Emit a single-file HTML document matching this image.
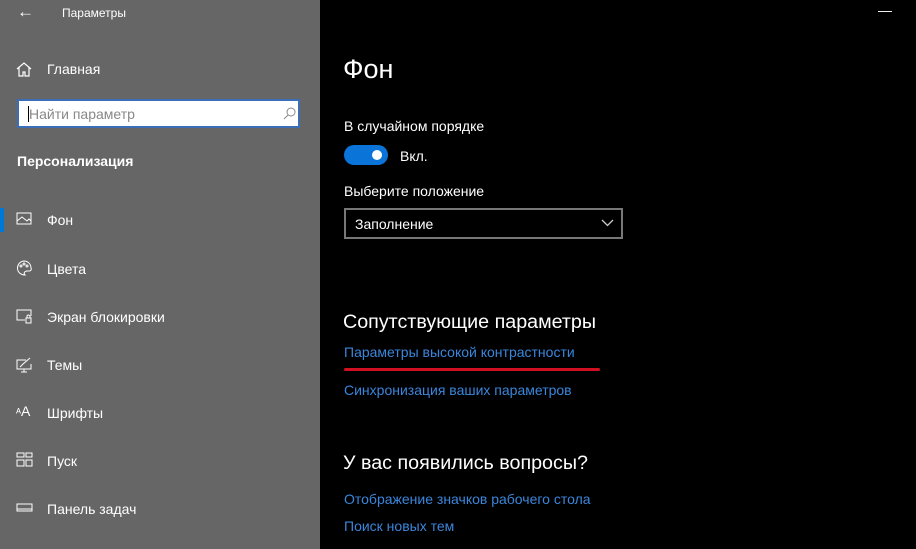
<!DOCTYPE html><html><head><meta charset="utf-8"><style>
body{margin:0;width:916px;height:549px;overflow:hidden;background:#000;font-family:"Liberation Sans",sans-serif;position:relative}
.side{position:absolute;left:0;top:0;width:320px;height:549px;background:#666;color:#fff}
.t{position:absolute;white-space:nowrap}
.s{font-size:14px;color:#fff}
.ic{position:absolute;left:16px}
.l{color:#3a86dc;font-size:14px}
</style></head><body>
<div class="side">
<div class="t" style="left:17px;top:2px;font-size:17px">←</div>
<div class="t" style="left:62px;top:6px;font-size:12px">Параметры</div>
<svg class="ic" style="top:61px" width="16" height="16" viewBox="0 0 16 16" fill="none" stroke="#fff" stroke-width="1.2"><path d="M1 8L8 2l7 6M3 6.5V15h4v-4h2v4h4V6.5"/></svg>
<div class="t s" style="left:47px;top:61px">Главная</div>
<div style="position:absolute;left:17px;top:99px;width:283px;height:29px;background:#fff;border:2px solid #3a6fb8;box-sizing:border-box"></div>
<div style="position:absolute;left:28px;top:106px;width:1px;height:16px;background:#000"></div>
<div class="t" style="left:29px;top:106px;font-size:14px;color:#888">Найти параметр</div>
<svg style="position:absolute;left:283px;top:107px" width="13" height="13" viewBox="0 0 13 13" fill="none" stroke="#888"><circle cx="8" cy="5" r="4"/><path d="M5 8l-4 4"/></svg>
<div class="t" style="left:17px;top:153px;font-size:14px;font-weight:bold">Персонализация</div>
<div style="position:absolute;left:0;top:208px;width:4px;height:24px;background:#0078d7"></div>
<svg class="ic" style="top:212px" width="16" height="14" viewBox="0 0 16 14" fill="none" stroke="#fff"><rect x="1" y="1" width="14" height="11"/><path d="M1 9l5-4 5 4 2-2 2 2"/></svg>
<div class="t s" style="left:47px;top:212px">Фон</div>
<svg class="ic" style="top:260px" width="16" height="16" viewBox="0 0 16 16" fill="none" stroke="#fff"><path d="M8 1a7 7 0 1 0 1 14c-2-2 0-4 2-4h2a2 2 0 0 0 2-3A7 7 0 0 0 8 1z"/><circle cx="5" cy="6" r="1"/><circle cx="8" cy="4" r="1"/><circle cx="11" cy="6" r="1"/></svg>
<div class="t s" style="left:47px;top:261px">Цвета</div>
<svg class="ic" style="top:309px" width="16" height="15" viewBox="0 0 16 15" fill="none" stroke="#fff"><path d="M9 11H1V1h14v6"/><rect x="10" y="9" width="5" height="5"/><path d="M11 9V7.5a1.5 1.5 0 0 1 3 0V9"/></svg>
<div class="t s" style="left:47px;top:309px">Экран блокировки</div>
<svg class="ic" style="top:357px" width="16" height="16" viewBox="0 0 16 16" fill="none" stroke="#fff"><path d="M10 3H1v9h14V7M8 12v3M5 15h6M4 10l3-3 7-6"/></svg>
<div class="t s" style="left:47px;top:357px">Темы</div>
<div class="t" style="left:16px;top:403px;font-size:11px">ᴬ<span style="font-size:14px">A</span></div>
<div class="t s" style="left:47px;top:405px">Шрифты</div>
<svg class="ic" style="top:452px" width="17" height="16" viewBox="0 0 17 16" fill="none" stroke="#fff"><rect x="1" y="1" width="7" height="4"/><rect x="10" y="1" width="6" height="4"/><rect x="1" y="8" width="7" height="6"/><rect x="10" y="8" width="6" height="6"/></svg>
<div class="t s" style="left:47px;top:453px">Пуск</div>
<svg class="ic" style="top:503px" width="17" height="10" viewBox="0 0 17 10" fill="none" stroke="#fff"><rect x="1" y="1" width="15" height="7"/><path d="M1 6h15"/></svg>
<div class="t s" style="left:47px;top:501px">Панель задач</div>
</div>
<div class="t" style="left:878px;top:2px;color:#fff;font-size:14px">—</div>
<div class="t" style="left:343px;top:54px;font-size:27px;color:#fff">Фон</div>
<div class="t s" style="left:344px;top:118px">В случайном порядке</div>
<div style="position:absolute;left:344px;top:145px;width:44px;height:20px;border-radius:10px;background:#0a74d8"></div>
<div style="position:absolute;left:372px;top:150px;width:10px;height:10px;border-radius:5px;background:#fff"></div>
<div class="t s" style="left:400px;top:148px">Вкл.</div>
<div class="t s" style="left:344px;top:183px">Выберите положение</div>
<div style="position:absolute;left:344px;top:208px;width:279px;height:31px;border:2px solid #777;box-sizing:border-box"></div>
<div class="t s" style="left:355px;top:216px">Заполнение</div>
<svg style="position:absolute;left:601px;top:219px" width="13" height="8" viewBox="0 0 13 8" fill="none" stroke="#ccc" stroke-width="1.3"><path d="M1 1l5.5 5.5L12 1"/></svg>
<div class="t" style="left:343px;top:311px;font-size:19.7px;color:#fff">Сопутствующие параметры</div>
<div class="t l" style="left:344px;top:344px">Параметры высокой контрастности</div>
<div style="position:absolute;left:344px;top:368px;width:256px;height:3px;background:#d01020;border-radius:2px"></div>
<div class="t l" style="left:344px;top:382px">Синхронизация ваших параметров</div>
<div class="t" style="left:343px;top:452px;font-size:19.7px;color:#fff">У вас появились вопросы?</div>
<div class="t l" style="left:344px;top:491px">Отображение значков рабочего стола</div>
<div class="t l" style="left:344px;top:518px">Поиск новых тем</div>
</body></html>
